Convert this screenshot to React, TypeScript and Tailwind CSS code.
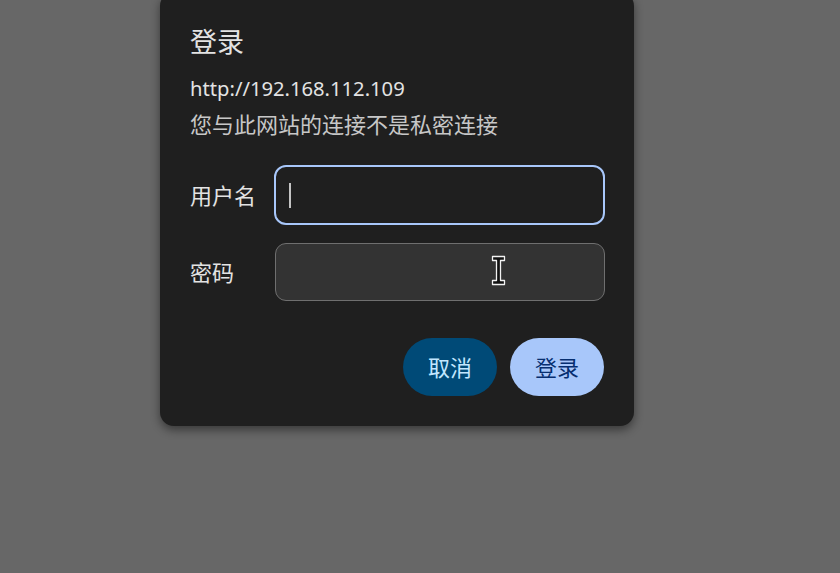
export default function App() {
  const cjk = { fontFamily: '"Noto Sans", "Noto Sans CJK SC", sans-serif' };
  return (
    <div className="w-[840px] h-[573px] overflow-hidden bg-[#676767]" style={cjk}>
      <div className="relative ml-[160px] mt-[-8px] w-[474px] rounded-[14px] bg-[#1f1f1f] pl-[30px] pr-[29px] pt-[32px] pb-[30px] shadow-[0_4px_10px_rgba(0,0,0,0.45)]">
        <h1 className="text-[27px] leading-[36px] text-[#e3e3e3]">登录</h1>
        <p className="mt-[14px] text-[20.2px] leading-[28px] text-[#e3e3e3]">http://192.168.112.109</p>
        <p className="mt-[8px] text-[22px] leading-[28px] text-[#c7c7c7]">您与此网站的连接不是私密连接</p>

        <div className="mt-[27px] flex items-center">
          <label className="w-[84px] text-[22px] text-[#e3e3e3]">用户名</label>
          <div className="flex h-[60px] w-[332px] items-center rounded-[12px] border-2 border-[#a8c7fa] bg-[#1f1f1f] pl-[13px]">
            <span className="h-[25px] w-[2px] bg-[#c4c4c4]" />
          </div>
        </div>

        <div className="mt-[18px] flex items-center">
          <label className="w-[85px] text-[22px] text-[#e3e3e3]">密码</label>
          <div className="relative h-[58px] w-[330px] rounded-[11px] border border-[#6f6f6f] bg-[#333333]">
            <svg className="absolute left-[215px] top-[11px]" width="15" height="31" viewBox="0 0 15 31">
              <path d="M1.5 1.5h12v4h-4v20h4v4h-12v-4h4v-20h-4z" fill="#111" stroke="#f2f2f2" strokeWidth="1.3" strokeLinejoin="round" />
            </svg>
          </div>
        </div>

        <div className="mt-[37px] flex justify-end gap-[13px] pr-px">
          <button className="h-[58px] w-[94px] rounded-full bg-[#004a77] text-[22px] text-[#c2e7ff]">取消</button>
          <button className="h-[58px] w-[94px] rounded-full bg-[#a8c7fa] text-[22px] text-[#062e6f]">登录</button>
        </div>
      </div>
    </div>
  );
}
